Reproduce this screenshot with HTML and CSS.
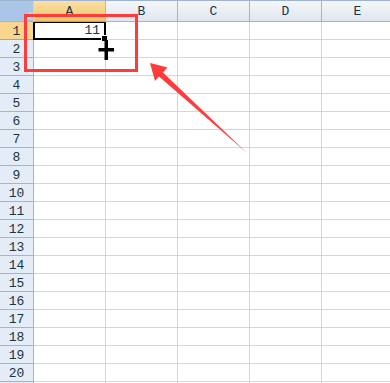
FILE: index.html
```
<!DOCTYPE html>
<html lang="zh">
<head>
    <meta charset="UTF-8">
    <meta name="viewport" content="width=device-width, initial-scale=1.0">
    <title>Sheet</title>
    <link rel="stylesheet" href="styles.css">
</head>
<body>
    <div class="sheet" id="sheet">
        <div class="corner"><span class="corner-tri"></span></div>
        <div class="col-head active">A</div>
        <div class="col-head">B</div>
        <div class="col-head">C</div>
        <div class="col-head">D</div>
        <div class="col-head">E</div>
    </div>

    <!-- Markierung -->
    <div class="mark-box"></div>
    <svg class="plus" width="18" height="22" viewBox="0 0 18 22">
        <path d="M6.5 1h3.5v8h6v3.5h-6v8.5h-3.5v-8.5h-6v-3.5h6z" fill="#000"/>
    </svg>
    <svg class="arrow" width="390" height="383" viewBox="0 0 390 383">
        <polygon points="150,63 167.5,67.5 163,72.5 247,153 159,76.5 155,81" fill="#ff3b3b"/>
    </svg>

    <script>
        // Zeilen erzeugen (Zeile 21 nur angeschnitten, ohne Nummer)
        const sheet = document.getElementById("sheet");
        for (let r = 1; r <= 21; r++) {
            const head = document.createElement("div");
            head.className = "row-head" + (r === 1 ? " active" : "");
            head.textContent = r <= 20 ? r : "";
            sheet.appendChild(head);
            for (let c = 0; c < 5; c++) {
                const cell = document.createElement("div");
                cell.className = "cell";
                if (r === 1 && c === 0) {
                    cell.classList.add("selected");
                    cell.innerHTML = '11<span class="handle"></span>';
                }
                sheet.appendChild(cell);
            }
        }
    </script>
</body>
</html>
```

FILE: styles.css
```
body {
    margin: 0;
    width: 390px;
    height: 383px;
    overflow: hidden;
    background: #fff;
    font-family: "Liberation Mono", "DejaVu Sans Mono", monospace;
    font-size: 13px;
    color: #1b3442;
}
.sheet {
    display: grid;
    grid-template-columns: 34px repeat(5, 72px);
    grid-template-rows: 21px;
    grid-auto-rows: 18px;
    border-top: 1px solid #9db3cf;
}
.sheet > div {
    box-sizing: border-box;
}
.corner {
    position: relative;
    background: #abc5e9;
    border-right: 1px solid #c9d8ee;
    border-bottom: 1px solid #9eb6ce;
}
.corner-tri {
    position: absolute;
    right: 2px;
    bottom: 2px;
    width: 0;
    height: 0;
    border-left: 7px solid transparent;
    border-bottom: 7px solid #dce7f6;
}
.col-head {
    display: flex;
    align-items: center;
    justify-content: center;
    background: linear-gradient(#f4f7fb, #dfe6ef);
    border-right: 1px solid #9eb6ce;
    border-bottom: 1px solid #9eb6ce;
    padding-top: 1px;
}
.col-head.active {
    background: linear-gradient(#fae0a8, #f1c366);
    border-right-color: #f2b149;
    border-bottom-color: #f29436;
}
.row-head {
    display: flex;
    align-items: center;
    justify-content: center;
    background: #e4ecf7;
    border-right: 1px solid #9eb6ce;
    border-bottom: 1px solid #9eb6ce;
    padding-top: 1px;
}
.row-head.active {
    background: #f9d68f;
    border-bottom-color: #f29436;
    border-right-color: #f2b149;
}
.cell {
    border-right: 1px solid #d0d7e5;
    border-bottom: 1px solid #d0d7e5;
}
.cell.selected {
    position: relative;
    border: 2px solid #000;
    border-top-width: 1px;
    margin-left: -1px;
    text-align: right;
    padding-right: 4px;
    line-height: 15px;
}
.handle {
    position: absolute;
    right: -4px;
    bottom: -4px;
    width: 5px;
    height: 5px;
    background: #000;
    border: 1px solid #fff;
}
.mark-box {
    position: absolute;
    left: 24px;
    top: 14px;
    width: 108px;
    height: 52px;
    border: 3px solid #ff3b3b;
}
.plus {
    position: absolute;
    left: 98px;
    top: 39px;
}
.arrow {
    position: absolute;
    left: 0;
    top: 0;
}
```
